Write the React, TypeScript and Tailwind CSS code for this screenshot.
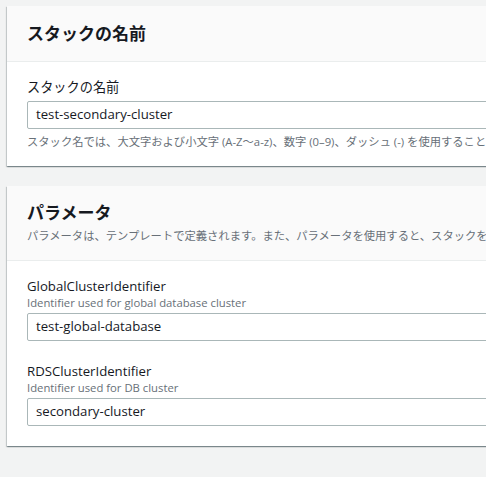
const font = "font-['Open_Sans','Noto_Sans_CJK_JP',sans-serif]";

type Field = {
  label: string;
  hint?: string;
  value: string;
};

function TextField({ label, hint, value }: Field) {
  return (
    <div className="flex flex-col">
      <label className="text-[13.2px] leading-[18px] text-[#16191f]">{label}</label>
      {hint && <p className="text-[11.3px] leading-[16px] text-[#687078]">{hint}</p>}
      <div
        className={
          hint
            ? "mt-[2px] flex h-[28px] w-full items-center rounded-[2px] border border-[#aab7b8] bg-white px-2 text-[13.2px] text-[#16191f]"
            : "mt-[5px] flex h-[28px] w-full items-center rounded-[2px] border border-[#aab7b8] bg-white px-2 text-[13.2px] text-[#16191f]"
        }
      >
        {value}
      </div>
    </div>
  );
}

function Panel({
  title,
  description,
  children,
}: {
  title: string;
  description?: string;
  children: React.ReactNode;
}) {
  return (
    <section className="w-[1000px] bg-white shadow-[0_1px_1px_0_rgba(0,28,36,0.3),1px_1px_1px_0_rgba(0,28,36,0.15),-1px_1px_1px_0_rgba(0,28,36,0.15)]">
      <div
        className={
          description
            ? "border-b border-[#eaeded] bg-[#fafafa] px-5 pt-[15px] pb-4"
            : "border-b border-[#eaeded] bg-[#fafafa] px-5 py-4"
        }
      >
        <h2 className="text-[17px] leading-[23px] font-bold text-[#16191f]">{title}</h2>
        {description && (
          <p className="mt-1 text-[11.3px] leading-4 whitespace-nowrap text-[#687078]">{description}</p>
        )}
      </div>
      <div className={description ? "px-5 pt-4 pb-[20px]" : "px-5 pt-4 pb-[16px]"}>{children}</div>
    </section>
  );
}

export default function App() {
  return (
    <div className={`${font} min-h-screen w-full overflow-hidden bg-[#f2f3f3] pt-[6px] pl-[7px]`}>
      <div className="flex flex-col gap-5">
        <Panel title="スタックの名前">
          <TextField label="スタックの名前" value="test-secondary-cluster" />
          <p className="mt-[5px] text-[11.3px] leading-4 whitespace-nowrap text-[#687078]">
            スタック名では、大文字および小文字 (A-Z〜a-z)、数字 (0–9)、ダッシュ (-) を使用することができます。
          </p>
        </Panel>

        <Panel
          title="パラメータ"
          description="パラメータは、テンプレートで定義されます。また、パラメータを使用すると、スタックを作成または更新するときにカスタム値を入力できます。"
        >
          <div className="flex flex-col gap-[21px]">
            <TextField
              label="GlobalClusterIdentifier"
              hint="Identifier used for global database cluster"
              value="test-global-database"
            />
            <TextField
              label="RDSClusterIdentifier"
              hint="Identifier used for DB cluster"
              value="secondary-cluster"
            />
          </div>
        </Panel>
      </div>
    </div>
  );
}
